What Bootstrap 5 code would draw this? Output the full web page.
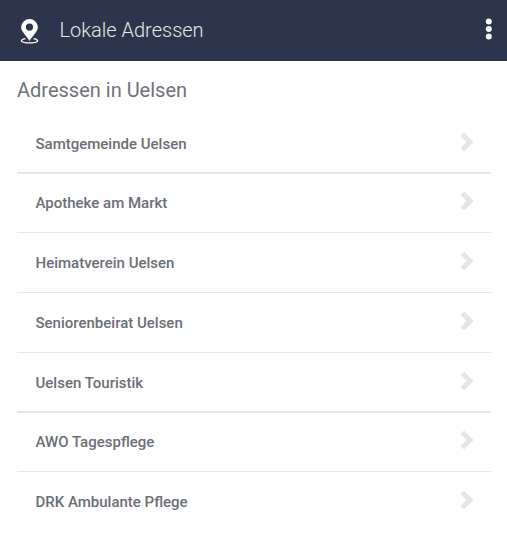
<!DOCTYPE html>
<html lang="de">
<head>
<meta charset="utf-8">
<meta name="viewport" content="width=device-width, initial-scale=1">
<title>Lokale Adressen</title>
<link href="https://cdn.jsdelivr.net/npm/bootstrap@5.3.0/dist/css/bootstrap.min.css" rel="stylesheet">
<style>
body{font-family:Roboto,sans-serif;background:#fff;color:#6f7278;overflow:hidden}
.app-bar{height:61px;background:#2c354b;padding:0 14px 0 20px}
.app-title{font-size:20px;font-weight:300;color:#e6e8ed;margin-left:20.500px;padding-bottom:2px;line-height:24px}
.menu-dots{margin-bottom:3px}
.section-title{font-size:20px;font-weight:400;line-height:24px;margin:17px 0 12px}
.address-area{padding:0 16px 0 17px}
.address-list{--bs-list-group-bg:transparent;--bs-list-group-color:#6b6e76}
.address-list .address-item{height:60px;padding:1px 17px 0 18.500px;font-size:15px;font-weight:500;border:0 solid #e6e6e6;border-bottom-width:1px}
.address-list .rule-thick{padding-top:2px;border-bottom-width:2px}
.address-list .row-short{height:59px;padding-top:0}
.address-list .address-item:last-child{padding-top:0;border-bottom:0}
.chevron{margin-bottom:4px}
</style>
</head>
<body>
<nav class="app-bar d-flex align-items-center">
<svg width="19" height="26" viewBox="0 0 19 26" aria-hidden="true"><path d="M5.500 20.700C-1.500 22 .8 24.900 9.500 24.900s11-2.900 4-4.200" fill="none" stroke="#fff" stroke-width="1.200"/><path fill="#fff" fill-rule="evenodd" d="M9.500 1A8.400 8.400 0 0 0 1.100 9.300C1.100 13.500 6.500 18 9.500 23c3-5 8.400-9.500 8.400-13.700A8.400 8.400 0 0 0 9.500 1zm0 4.500a3.600 3.600 0 1 1 0 7.200a3.600 3.600 0 0 1 0-7.200z"/></svg>
<h1 class="app-title mb-0">Lokale Adressen</h1>
<svg class="menu-dots ms-auto" width="8" height="22" viewBox="0 0 8 22" fill="#fff" role="img" aria-label="Menü"><circle cx="3.800" cy="3.500" r="3"/><circle cx="3.800" cy="11" r="3"/><circle cx="3.800" cy="18.500" r="3"/></svg>
</nav>
<svg class="d-none"><symbol id="chevron" viewBox="0 0 14 20"><path d="M2.300 2.300L10 10l-7.700 7.700" fill="none" stroke="#e5e5e5" stroke-width="5"/></symbol></svg>
<main class="address-area">
<h2 class="section-title">Adressen in Uelsen</h2>
<div class="list-group list-group-flush address-list">
<a href="#" class="list-group-item address-item rule-thick d-flex align-items-center justify-content-between">Samtgemeinde Uelsen<svg class="chevron" width="14" height="20"><use href="#chevron"/></svg></a>
<a href="#" class="list-group-item address-item row-short d-flex align-items-center justify-content-between">Apotheke am Markt<svg class="chevron" width="14" height="20"><use href="#chevron"/></svg></a>
<a href="#" class="list-group-item address-item d-flex align-items-center justify-content-between">Heimatverein Uelsen<svg class="chevron" width="14" height="20"><use href="#chevron"/></svg></a>
<a href="#" class="list-group-item address-item d-flex align-items-center justify-content-between">Seniorenbeirat Uelsen<svg class="chevron" width="14" height="20"><use href="#chevron"/></svg></a>
<a href="#" class="list-group-item address-item rule-thick d-flex align-items-center justify-content-between">Uelsen Touristik<svg class="chevron" width="14" height="20"><use href="#chevron"/></svg></a>
<a href="#" class="list-group-item address-item row-short d-flex align-items-center justify-content-between">AWO Tagespflege<svg class="chevron" width="14" height="20"><use href="#chevron"/></svg></a>
<a href="#" class="list-group-item address-item d-flex align-items-center justify-content-between">DRK Ambulante Pflege<svg class="chevron" width="14" height="20"><use href="#chevron"/></svg></a>
</div>
</main>
<script src="https://cdn.jsdelivr.net/npm/bootstrap@5.3.0/dist/js/bootstrap.bundle.min.js"></script>
</body>
</html>
